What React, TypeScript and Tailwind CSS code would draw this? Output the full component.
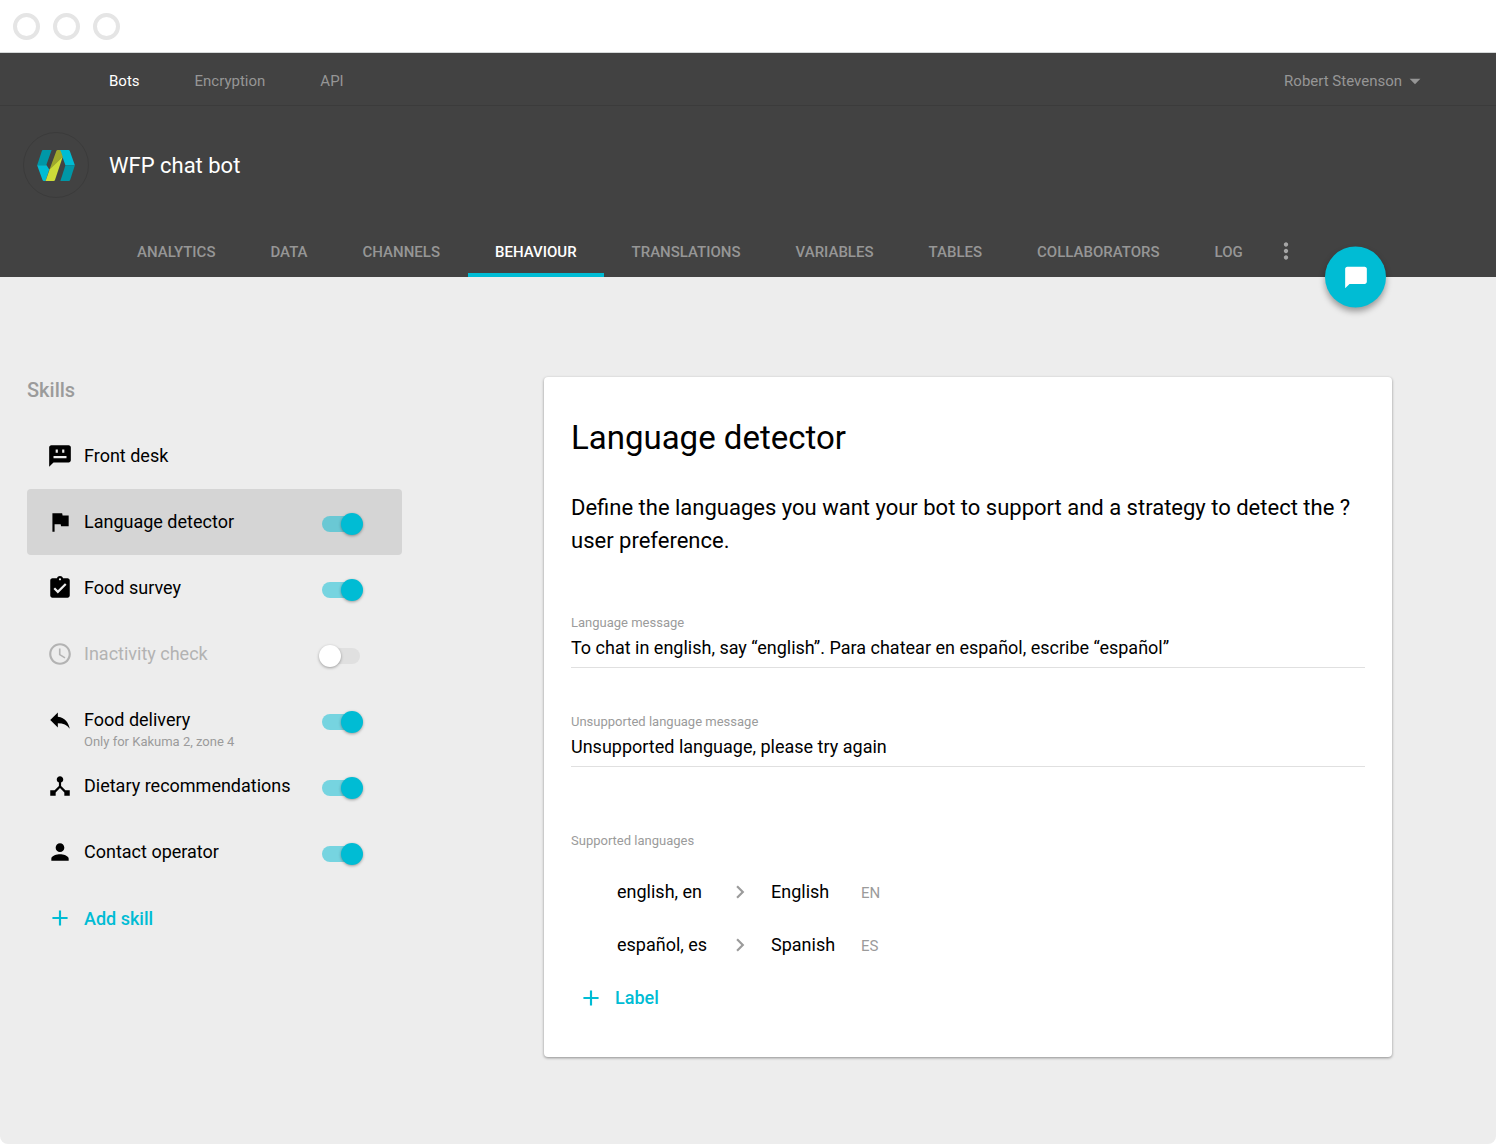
import { useState } from 'react'
import {
  MdAccessTime,
  MdAdd,
  MdArrowDropDown,
  MdAssignmentTurnedIn,
  MdChatBubble,
  MdChevronRight,
  MdDeviceHub,
  MdFlag,
  MdMoreVert,
  MdPerson,
  MdReply,
} from 'react-icons/md'

const navLinks = ['Bots', 'Encryption', 'API']

const tabs = [
  'Analytics',
  'Data',
  'Channels',
  'Behaviour',
  'Translations',
  'Variables',
  'Tables',
  'Collaborators',
  'Log',
]

const initialSkills = [
  { id: 'front-desk', name: 'Front desk', icon: FrontDeskIcon },
  { id: 'language', name: 'Language detector', icon: MdFlag, enabled: true },
  { id: 'survey', name: 'Food survey', icon: MdAssignmentTurnedIn, enabled: true },
  { id: 'inactivity', name: 'Inactivity check', icon: MdAccessTime, enabled: false },
  { id: 'delivery', name: 'Food delivery', note: 'Only for Kakuma 2, zone 4', icon: MdReply, enabled: true },
  { id: 'dietary', name: 'Dietary recommendations', icon: MdDeviceHub, enabled: true },
  { id: 'operator', name: 'Contact operator', icon: MdPerson, enabled: true },
]

const languages = [
  { keywords: 'english, en', name: 'English', code: 'EN' },
  { keywords: 'español, es', name: 'Spanish', code: 'ES' },
]

function FrontDeskIcon({ className }: { className?: string }) {
  return (
    <svg viewBox="0 0 24 24" fill="currentColor" fillRule="evenodd" className={className}>
      <path d="M4 2h16c1.1 0 2 .9 2 2v12c0 1.1-.9 2-2 2H6l-4 4V4c0-1.1.9-2 2-2zM8 6v3h2V6zM14 6v3h2V6zM6 12v2h12v-2z" />
    </svg>
  )
}

function Logo() {
  return (
    <svg viewBox="0 0 112 92" className="h-[31px] w-[38px]">
      <path d="M17 0H43L27 45H0L14 3Q15 0 17 0Z" fill="#0097a7" />
      <path d="M0 45H28L36 58L25 92H20Q17 92 16 89Z" fill="#00bcd4" />
      <path d="M66 0H93Q96 0 97 3L112 45H84L74 18Z" fill="#00bcd4" />
      <path d="M84 45H112L98 89Q97 92 94 92H69Z" fill="#0097a7" />
      <path d="M57 3Q58 0 61 0H66Q69 0 70 3L76 20L36 60Z" fill="#9ea82c" />
      <path d="M76 20L53 89Q52 92 49 92H25L37 58Z" fill="#cddc39" />
    </svg>
  )
}

function Header() {
  return (
    <header className="relative bg-[#424242]">
      <div className="flex h-[53px] items-center justify-between border-b border-[#3b3b3b] pt-1 pr-[68px] pl-[109px] text-[15px]">
        <nav className="flex gap-[55px]">
          {navLinks.map((link, i) => (
            <a key={link} href="#" className={i === 0 ? 'text-white' : 'text-[#969696]'}>
              {link}
            </a>
          ))}
        </nav>
        <button className="flex items-center text-[#969696]">
          Robert Stevenson
          <MdArrowDropDown className="size-[26px]" />
        </button>
      </div>

      <div className="flex items-center gap-5 px-[23px] pt-[26px]">
        <div className="flex size-[66px] items-center justify-center rounded-full border border-[#3b3b3b]">
          <Logo />
        </div>
        <h1 className="text-[22px] text-white">WFP chat bot</h1>
      </div>

      <div className="flex gap-px pt-[34px] pl-[110px]">
        {tabs.map((tab) => (
          <button
            key={tab}
            className={
              tab === 'Behaviour'
                ? 'h-[45px] border-b-4 border-[#00bcd4] px-[27px] text-[15px] font-medium text-white uppercase'
                : 'h-[45px] border-b-4 border-transparent px-[27px] text-[15px] font-medium text-[#969696] uppercase'
            }
          >
            {tab}
          </button>
        ))}
        <button
          aria-label="More"
          className="flex h-[45px] w-[30px] items-center justify-center pb-2 text-[#a6a6a6]"
        >
          <MdMoreVert className="size-[26px]" />
        </button>
      </div>

      <button
        aria-label="Chat"
        className="absolute right-[110px] bottom-0 flex size-[61px] translate-y-1/2 items-center justify-center rounded-full bg-[#00bcd4] text-white shadow-[0_4px_6px_rgba(0,0,0,0.35)]"
      >
        <MdChatBubble className="size-[26px]" />
      </button>
    </header>
  )
}

function Skills() {
  const [skills, setSkills] = useState(initialSkills)
  const [selected, setSelected] = useState('language')

  const toggle = (id: string) =>
    setSkills(skills.map((s) => (s.id === id ? { ...s, enabled: !s.enabled } : s)))

  return (
    <aside className="w-[375px] shrink-0">
      <h2 className="text-[20px] leading-[26px] font-medium text-[#9b9b9b]">Skills</h2>
      <ul className="mt-5">
        {skills.map(({ id, name, note, icon: Icon, enabled }) => (
          <li
            key={id}
            className={`flex h-[66px] items-center rounded pr-[42px] pl-5 ${id === selected ? 'bg-[#d5d5d5]' : ''} ${enabled === false ? 'text-[#b3b3b3]' : 'text-black'}`}
          >
            <button
              onClick={() => setSelected(id)}
              className="flex h-full flex-1 items-start gap-[11px] pt-5 text-left"
            >
              <Icon className="size-[26px] shrink-0" />
              <span className="flex flex-col">
                <span id={id} className="text-[18px] leading-[26px]">
                  {name}
                </span>
                {note && <span className="text-[13px] leading-[18px] text-[#9b9b9b]">{note}</span>}
              </span>
            </button>
            {enabled !== undefined && (
              <input
                type="checkbox"
                role="switch"
                aria-labelledby={id}
                checked={enabled}
                onChange={() => toggle(id)}
                className="relative mt-1 h-4 w-[38px] appearance-none rounded-full bg-[#e0e0e0] before:absolute before:-top-[3px] before:-left-[3px] before:size-[22px] before:rounded-full before:bg-white before:shadow-[0_1px_3px_rgba(0,0,0,0.35)] checked:bg-[#00bcd4]/50 checked:before:left-[19px] checked:before:bg-[#00bcd4]"
              />
            )}
          </li>
        ))}
      </ul>
      <button className="flex h-[66px] items-center gap-[11px] pl-5 text-[18px] font-medium text-[#00bcd4]">
        <MdAdd className="size-[26px]" />
        Add skill
      </button>
    </aside>
  )
}

function Field({ id, label, value }: { id: string; label: string; value: string }) {
  return (
    <div className="flex flex-col">
      <label htmlFor={id} className="text-[13px] leading-[18px] text-[#9b9b9b]">
        {label}
      </label>
      <input
        id={id}
        defaultValue={value}
        className="h-9 border-b border-[#e0e0e0] bg-transparent pb-[5px] text-[18px] text-black outline-none"
      />
    </div>
  )
}

function LanguageDetector() {
  return (
    <section className="min-w-0 flex-1 rounded bg-white px-[27px] pt-10 pb-[33px] text-black shadow-[0_1px_3px_rgba(0,0,0,0.4)]">
      <h2 className="text-[33px] leading-[42px]">Language detector</h2>
      <p className="mt-8 text-[22px] leading-[33px]">
        Define the languages you want your bot to support and a strategy to detect the ?
        <br />
        user preference.
      </p>

      <div className="mt-[57px] flex flex-col gap-[45px]">
        <Field
          id="language-message"
          label="Language message"
          value="To chat in english, say “english”. Para chatear en español, escribe “español”"
        />
        <Field
          id="unsupported-message"
          label="Unsupported language message"
          value="Unsupported language, please try again"
        />
      </div>

      <h3 className="mt-[65px] text-[13px] leading-[18px] text-[#9b9b9b]">Supported languages</h3>
      <table className="mt-[15px] ml-[46px] text-left">
        <tbody>
          {languages.map((lang) => (
            <tr key={lang.code} className="h-[53px] text-[18px]">
              <td className="w-[110px] p-0">{lang.keywords}</td>
              <td className="w-11 p-0">
                <MdChevronRight className="size-[26px] text-[#9b9b9b]" />
              </td>
              <td className="w-[90px] p-0">{lang.name}</td>
              <td className="p-0 pt-[3px] text-[15px] text-[#9b9b9b]">{lang.code}</td>
            </tr>
          ))}
        </tbody>
      </table>
      <button className="flex h-[53px] items-center gap-[11px] pl-[7px] text-[18px] font-medium text-[#00bcd4]">
        <MdAdd className="size-[26px]" />
        Label
      </button>
    </section>
  )
}

export default function App() {
  return (
    <div className="flex min-h-screen flex-col bg-white font-[Roboto,sans-serif]">
      <div className="flex h-[53px] items-center gap-[13px] border-b border-[#d5d8d8] pl-[13px]">
        <span className="size-[27px] rounded-full border-4 border-[#e5e5e5]" />
        <span className="size-[27px] rounded-full border-4 border-[#e5e5e5]" />
        <span className="size-[27px] rounded-full border-4 border-[#e5e5e5]" />
      </div>
      <Header />
      <main className="flex flex-1 items-start gap-[142px] rounded-b-lg bg-[#ededed] pt-[100px] pr-[104px] pb-20 pl-[27px]">
        <Skills />
        <LanguageDetector />
      </main>
    </div>
  )
}
